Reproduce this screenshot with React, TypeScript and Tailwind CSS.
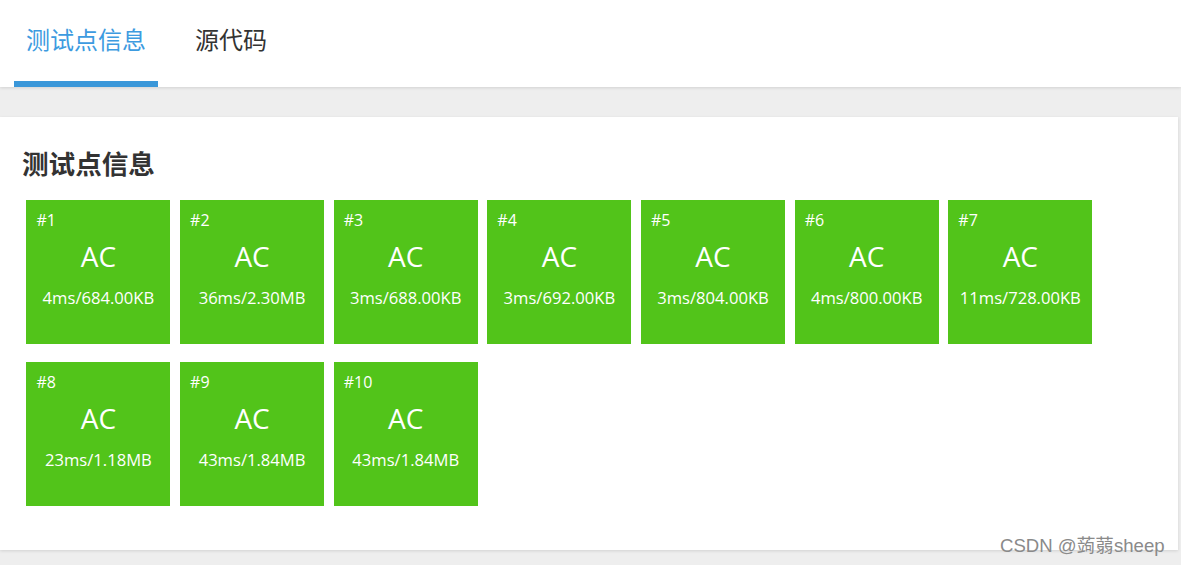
import React from 'react';

interface TestCase {
  id: number;
  status: string;
  time: string;
  memory: string;
}

const cases: TestCase[] = [
  { id: 1, status: 'AC', time: '4ms', memory: '684.00KB' },
  { id: 2, status: 'AC', time: '36ms', memory: '2.30MB' },
  { id: 3, status: 'AC', time: '3ms', memory: '688.00KB' },
  { id: 4, status: 'AC', time: '3ms', memory: '692.00KB' },
  { id: 5, status: 'AC', time: '3ms', memory: '804.00KB' },
  { id: 6, status: 'AC', time: '4ms', memory: '800.00KB' },
  { id: 7, status: 'AC', time: '11ms', memory: '728.00KB' },
  { id: 8, status: 'AC', time: '23ms', memory: '1.18MB' },
  { id: 9, status: 'AC', time: '43ms', memory: '1.84MB' },
  { id: 10, status: 'AC', time: '43ms', memory: '1.84MB' },
];

const font = "font-['Open_Sans','Noto_Sans_CJK_SC',sans-serif]";

function CaseTile({ item }: { item: TestCase }) {
  return (
    <div className="w-[144px] h-[144px] bg-[#52c41a] text-white flex flex-col">
      <div className="pl-[10px] pt-[9px] text-[16px] leading-[22px]">#{item.id}</div>
      <div className="text-center text-[28px] leading-[36px] mt-[7px]">{item.status}</div>
      <div className="text-center text-[16.6px] leading-[22px] mt-[13px]">
        {item.time}/{item.memory}
      </div>
    </div>
  );
}

export default function App() {
  return (
    <div className={`relative w-[1181px] h-[565px] bg-[#eeeeee] overflow-hidden ${font}`}>
      <div className="h-[87px] bg-white shadow-[0_1px_3px_rgba(0,0,0,0.12)] flex items-end pl-[14px]">
        <div className="flex">
          <div className="w-[144px] h-[87px] flex flex-col">
            <div className="flex-1 flex items-center justify-center text-[24px] text-[#3d9be0] pb-[2px]">
              测试点信息
            </div>
            <div className="h-[6px] bg-[#3a97d9]" />
          </div>
          <div className="h-[87px] flex items-center pl-[37px] pb-[8px] text-[24px] text-[#333333]">
            源代码
          </div>
        </div>
      </div>

      <div className="mt-[30px] w-[1178px] h-[433px] bg-white shadow-[0_1px_3px_rgba(0,0,0,0.12)] pl-[22px] pt-[27px]">
        <h3 className="text-[26.6px] leading-[40px] font-bold text-[#333333]">测试点信息</h3>
        <div className="pl-[4.4px] mt-[16px] flex flex-wrap w-[1080px] gap-x-[9.67px] gap-y-[18px]">
          {cases.map((c) => (
            <CaseTile key={c.id} item={c} />
          ))}
        </div>
      </div>

      <div className="absolute left-[1000px] top-[532px] text-[18.6px] text-[#8a8a8a] font-['Liberation_Sans','Noto_Sans_CJK_SC',sans-serif]">
        CSDN @蒟蒻sheep
      </div>
    </div>
  );
}
